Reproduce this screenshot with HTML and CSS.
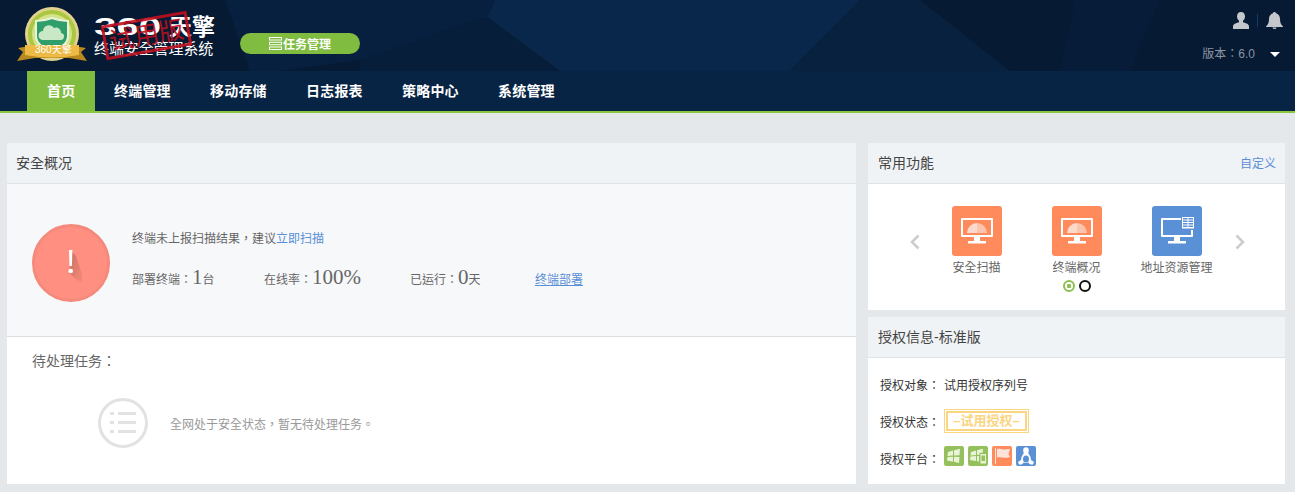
FILE: index.html
```html
<!DOCTYPE html>
<html>
<head>
  <meta charset="UTF-8">
  <meta name="viewport" content="width=device-width, initial-scale=1.0">
  <title>360天擎 终端安全管理系统</title>
  <link rel="stylesheet" href="styles.css">
</head>
<body>
  <div class="header">
    <svg class="bg-shapes" width="1295" height="71" viewBox="0 0 1295 71">
      <polygon points="225,0 495,0 487,17 360,60 280,71 250,71" fill="#07203f"/>
      <polygon points="360,71 360,60 487,17 560,71" fill="#061e3a"/>
      <polygon points="495,0 860,0 790,71 560,71 487,17" fill="#09264b"/>
      <polygon points="860,0 920,0 1010,71 790,71" fill="#07213f"/>
      <polygon points="1060,71 1075,0 1160,0 1130,71" fill="#071c38"/>
    </svg>
    <div class="brand">
      <svg class="badge" width="72" height="58" viewBox="0 0 72 58">
        <circle cx="35" cy="27" r="27" fill="#e2d28f"/>
        <circle cx="35" cy="27" r="24" fill="#a9c73f"/>
        <circle cx="35" cy="27" r="20" fill="#d5e28c"/>
        <path d="M19 14c6 0 11-1 16-3 5 2 10 3 16 3v15c0 8-8 12-16 16-8-4-16-8-16-16z" fill="#2f9e6a" stroke="#e8f3d8" stroke-width="2"/>
        <path d="M26 33a4.500 4.500 0 0 1 0-9 6 6 0 0 1 11-3 5 5 0 0 1 7 5 3.500 3.500 0 0 1-1 7z" fill="#c9e8c6"/>
        <path d="M0 54l6-9-5-4 12-2h44l12 2-5 4 6 9-18-3H18z" fill="#b98a20"/>
        <path d="M8 38h54v10q-27 5-54 0z" fill="#edbb45"/>
      </svg>
      <span class="badge-text">360天擎</span>
      <div class="brand-name">
        <div class="brand-top"><span class="brand-num"><span>360</span></span>天擎</div>
        <div class="brand-sub">终端安全管理系统</div>
        <div class="stamp">试用版</div>
      </div>
    </div>
    <a class="task-btn">
      <svg width="13" height="13" viewBox="0 0 13 13"><path d="M0 0h13v3.500H0zM1 1v1.500h11V1zM0 4.700h13v3.500H0zM1 5.700v1.500h11V5.700zM0 9.500h13V13H0zM1 10.500V12h11v-1.500z" fill="#fff" fill-rule="evenodd"/></svg>
      任务管理
    </a>
    <div class="header-right">
      <div class="user-icons">
        <svg width="16" height="17" viewBox="0 0 16 17"><path d="M8 0c2.600 0 4 2 4 4.500 0 2-1 3.500-2 4.300v1.500c2 .7 6 1.500 6 4.200V17H0v-2.500c0-2.700 4-3.500 6-4.200V8.800C5 8 4 6.500 4 4.500 4 2 5.400 0 8 0z" fill="#c4c8cc"/></svg>
        <i class="sep"></i>
        <svg width="17" height="17" viewBox="0 0 17 17"><path d="M8.500 0c1 0 1.500.6 1.500 1.300C12.500 2 14 4.200 14 7c0 4 1 5.500 3 7.500V15H0v-.5C2 12.500 3 11 3 7c0-2.800 1.500-5 4-5.700C7 .6 7.500 0 8.500 0zM6.500 15.500h4a2 1.500 0 0 1-4 0z" fill="#c4c8cc"/></svg>
      </div>
      <div class="version">版本：6.0<span class="caret"></span></div>
    </div>
  </div>

  <div class="nav">
    <a class="nav-item active">首页</a>
    <a class="nav-item">终端管理</a>
    <a class="nav-item">移动存储</a>
    <a class="nav-item">日志报表</a>
    <a class="nav-item">策略中心</a>
    <a class="nav-item">系统管理</a>
  </div>

  <div class="main">
    <div class="panel left">
      <div class="panel-title">安全概况</div>
      <div class="overview">
        <div class="alert-circle">
          <svg width="24" height="38" viewBox="0 0 24 38">
            <defs>
              <linearGradient id="excl" x1="0" y1="0" x2="1" y2="1">
                <stop offset="0" stop-color="#c9705f"/>
                <stop offset="1" stop-color="#f58a7c"/>
              </linearGradient>
            </defs>
            <polygon points="10,8 14,12 20,30 20,38 15,36 7,29" fill="url(#excl)"/>
            <path d="M7 6h3.400l-.5 16H7.500z" fill="#fff"/>
            <circle cx="8.700" cy="27" r="2.300" fill="#fff"/>
          </svg>
        </div>
        <div class="overview-info">
          <div class="notice">终端未上报扫描结果，建议<a class="link">立即扫描</a></div>
          <div class="stats">
            <div class="stat s1">部署终端：<b>1</b>台</div>
            <div class="stat s2">在线率：<b>100%</b></div>
            <div class="stat s3">已运行：<b>0</b>天</div>
            <a class="link under">终端部署</a>
          </div>
        </div>
      </div>
      <div class="tasks">
        <div class="tasks-title">待处理任务：</div>
        <div class="tasks-empty">
          <svg width="50" height="50" viewBox="0 0 50 50">
            <circle cx="25" cy="25" r="23.500" fill="none" stroke="#e2e2e2" stroke-width="3"/>
            <path d="M12 14h4v3h-4zM20 14h18v3H20zM12 23h4v3h-4zM20 23h18v3H20zM12 32h4v3h-4zM20 32h18v3H20z" fill="#e2e2e2"/>
          </svg>
          <span>全网处于安全状态，暂无待处理任务。</span>
        </div>
      </div>
    </div>

    <div class="side">
      <div class="panel quick">
        <div class="panel-title">常用功能<a class="link custom">自定义</a></div>
        <div class="carousel">
          <svg class="arrow" width="10" height="16" viewBox="0 0 10 16"><path d="M8.500 1.500L2 8l6.500 6.500" fill="none" stroke="#ccc" stroke-width="2.500"/></svg>
          <div class="apps">
            <div class="app">
              <div class="app-icon orange">
                <svg width="34" height="28" viewBox="0 0 34 28">
                  <path d="M2 1h30a1 1 0 0 1 1 1v17a1 1 0 0 1-1 1H2a1 1 0 0 1-1-1V2a1 1 0 0 1 1-1zM3 3v15h28V3zM14 20h6v4h-6zM8 24h18v2.500H8z" fill="#fff" fill-rule="evenodd"/>
                  <path d="M7 16a10 10 0 0 1 10-10v10z" fill="#fbd9cb"/>
                  <path d="M17 6a10 10 0 0 1 10 10H17z" fill="#fbc4ad"/>
                </svg>
              </div>
              <div class="app-name">安全扫描</div>
            </div>
            <div class="app">
              <div class="app-icon orange">
                <svg width="34" height="28" viewBox="0 0 34 28">
                  <path d="M2 1h30a1 1 0 0 1 1 1v17a1 1 0 0 1-1 1H2a1 1 0 0 1-1-1V2a1 1 0 0 1 1-1zM3 3v15h28V3zM14 20h6v4h-6zM8 24h18v2.500H8z" fill="#fff" fill-rule="evenodd"/>
                  <path d="M7 16a10 10 0 0 1 10-10v10z" fill="#fbd9cb"/>
                  <path d="M17 6a10 10 0 0 1 10 10H17z" fill="#fbc4ad"/>
                </svg>
              </div>
              <div class="app-name">终端概况</div>
            </div>
            <div class="app">
              <div class="app-icon blue">
                <svg width="34" height="28" viewBox="0 0 34 28">
                  <path d="M2 1h19v2H3v15h28v-5h2v6a1 1 0 0 1-1 1H2a1 1 0 0 1-1-1V2a1 1 0 0 1 1-1zM14 20h6v4h-6zM8 24h18v2.500H8z" fill="#fff"/>
                  <path d="M22 0h12v11.500H22zM23 1v1.500h4.500V1zM28.500 1v1.500H33V1zM23 3.500V5h4.500V3.500zM28.500 3.500V5H33V3.500zM23 6v1.500h4.500V6zM28.500 6v1.500H33V6zM23 8.500V10h4.500V8.500zM28.500 8.500V10H33V8.500z" fill="#fff" fill-rule="evenodd"/>
                </svg>
              </div>
              <div class="app-name">地址资源管理</div>
            </div>
          </div>
          <svg class="arrow" width="10" height="16" viewBox="0 0 10 16"><path d="M1.500 1.500L8 8l-6.500 6.500" fill="none" stroke="#ccc" stroke-width="2.500"/></svg>
          <div class="dots"><i class="dot on"></i><i class="dot"></i></div>
        </div>
      </div>

      <div class="panel license">
        <div class="panel-title">授权信息-标准版</div>
        <div class="license-body">
          <div class="row r1"><span class="label">授权对象：</span>试用授权序列号</div>
          <div class="row r2"><span class="label">授权状态：</span><span class="trial">–试用授权–</span></div>
          <div class="row r3"><span class="label">授权平台：</span>
            <span class="plat green">
              <svg width="16" height="16" viewBox="0 0 16 16"><path d="M2 4l5-1.500v5L1.500 8zM8 2.300l6-1.500-.5 6.500L8 7.500zM1.500 9L7 8.700v5L1 12.500zM8 8.700l5.500.2-.5 6L8 13.800z" fill="#e9f3da"/></svg>
            </span>
            <span class="plat green">
              <svg width="16" height="16" viewBox="0 0 16 16"><path d="M1 4l5-1.500v4.500L.5 7.500zM7 2.300l6-1.500-.3 4H9.500v2H7zM.5 8.500L6 8v5L0 12zM7 8h2v5.500l-2-.3z" fill="#e9f3da"/><path d="M10.500 6H16v9.500h-5.500zM11.500 7.500v5.500H15V7.500z" fill="#e9f3da" fill-rule="evenodd"/></svg>
            </span>
            <span class="plat orange">
              <svg width="16" height="16" viewBox="0 0 16 16"><path d="M1 0h1v16H1z" fill="#fde4d8"/><path d="M3 1c3-1 5 1.500 11 0l2 0-1.500 5L16 9c-6 2-9-.5-13 .5z" fill="#fde4d8"/></svg>
            </span>
            <span class="plat blue">
              <svg width="16" height="18" viewBox="0 0 16 18">
                <ellipse cx="8" cy="3.500" rx="2.800" ry="3.300" fill="#fff"/>
                <path d="M8 4C5 6 3 10 3 13c0 2 2 3 5 3s5-1 5-3c0-3-2-7-5-9z" fill="#fff"/>
                <ellipse cx="8" cy="12" rx="3" ry="3.500" fill="#5a90d6"/>
                <path d="M0 15l3-2 2.500 3-2 1.500H1zM16 15l-3-2-2.500 3 2 1.500H15z" fill="#fff"/>
              </svg>
            </span>
          </div>
        </div>
      </div>
    </div>
  </div>
</body>
</html>
```

FILE: styles.css
```css
html, body {
  margin: 0;
  padding: 0;
}
body {
  font-family: "Liberation Sans", "Noto Sans CJK TC", sans-serif;
  font-size: 12px;
  color: #666;
  background: #e5e8eb;
  height: 492px;
  overflow: hidden;
}
a {
  cursor: pointer;
}
.header {
  position: relative;
  height: 71px;
  background: #061a33;
  display: flex;
  overflow: hidden;
}
.bg-shapes {
  position: absolute;
  left: 0;
  top: 0;
}
.brand {
  position: relative;
  width: 240px;
  height: 71px;
}
.badge {
  position: absolute;
  left: 17px;
  top: 7px;
}
.badge-text {
  position: absolute;
  left: 35px;
  top: 43px;
  font-size: 10px;
  line-height: 14px;
  color: #fff;
  white-space: nowrap;
}
.brand-name {
  position: absolute;
  left: 94px;
  top: 14px;
  color: #fff;
}
.brand-top {
  font-size: 23px;
  line-height: 26px;
  font-weight: bold;
  white-space: nowrap;
  display: flex;
}
.brand-num {
  width: 75px;
}
.brand-num span {
  display: inline-block;
  transform: scaleX(1.75);
  transform-origin: left center;
}
.brand-sub {
  font-size: 15px;
  line-height: 16px;
  margin-top: 1px;
  white-space: nowrap;
  width: 122px;
  letter-spacing: -.1px;
}
.stamp {
  position: absolute;
  left: 9px;
  top: 4px;
  border: 3px solid #c0101e;
  color: #c0101e;
  font-size: 25px;
  font-weight: normal;
  line-height: 29px;
  padding: 0 3px;
  white-space: nowrap;
  opacity: .9;
  transform: rotate(-10deg);
}
.task-btn {
  position: relative;
  align-self: flex-start;
  margin-top: 33px;
  width: 120px;
  height: 21px;
  border-radius: 11px;
  background: #80bc3f;
  color: #fff;
  font-size: 12px;
  font-weight: bold;
  display: flex;
  align-items: center;
  justify-content: center;
  gap: 1px;
}
.header-right {
  position: absolute;
  right: 12px;
  top: 12px;
  display: flex;
  flex-direction: column;
  align-items: flex-end;
}
.user-icons {
  display: flex;
  align-items: center;
  gap: 13px;
}
.sep {
  width: 1px;
  height: 13px;
  background: #173a63;
  margin: 0 -5px;
}
.version {
  margin-top: 17px;
  margin-right: 3px;
  color: #8b95a1;
  line-height: 16px;
  display: flex;
  align-items: center;
}
.caret {
  margin-left: 15px;
  border-left: 5px solid transparent;
  border-right: 5px solid transparent;
  border-top: 5px solid #fff;
}
.nav {
  height: 40px;
  background: #082444;
  border-bottom: 2px solid #8cc63f;
  padding-left: 27px;
  display: flex;
}
.nav-item {
  width: 56px;
  padding: 0 20px 0 0;
  line-height: 40px;
  color: #fff;
  font-size: 14px;
  font-weight: bold;
  letter-spacing: .2px;
  white-space: nowrap;
  margin-left: -1px;
  margin-right: 1px;
  padding-left: 20px;
}
.nav-item.active {
  width: 28px;
  margin: 0;
  background: #80bc3f;
}
.main {
  margin-top: 30px;
  padding: 0 10px 0 7px;
  display: flex;
  gap: 12px;
  align-items: flex-start;
}
.panel {
  background: #fff;
}
.left {
  width: 849px;
  height: 341px;
}
.side {
  width: 417px;
  display: flex;
  flex-direction: column;
  gap: 7px;
}
.panel-title {
  height: 40px;
  line-height: 40px;
  padding: 0 10px;
  background: #f0f3f6;
  border-bottom: 1px solid #dfe3e6;
  font-size: 14px;
  color: #444;
  display: flex;
  justify-content: space-between;
}
.left .panel-title {
  padding-left: 9px;
}
.link {
  color: #5a8fd6;
}
.under {
  text-decoration: underline;
}
.custom {
  font-size: 12px;
  color: #5a8fd6;
  margin-right: -1px;
  padding-top: 1px;
}
.overview {
  height: 152px;
  background: #f7f8fa;
  border-bottom: 1px solid #dedede;
  display: flex;
  align-items: center;
  padding-left: 25px;
}
.alert-circle {
  box-sizing: border-box;
  width: 78px;
  height: 78px;
  margin-top: 6px;
  padding-left: 6px;
  border-radius: 50%;
  background: #ff8f81;
  border: 3px solid #f58a7c;
  display: flex;
  align-items: center;
  justify-content: center;
  flex: none;
}
.overview-info {
  margin-left: 22px;
}
.notice {
  line-height: 16px;
}
.stats {
  display: flex;
  align-items: baseline;
  margin-top: 18px;
}
.stat b {
  font-family: "Liberation Serif", serif;
  font-weight: normal;
  font-size: 21px;
}
.s1 { width: 132px; }
.s2 { width: 146px; }
.s3 { width: 125px; }
.tasks {
  padding: 14px 25px;
}
.tasks-title {
  font-size: 14px;
  line-height: 20px;
}
.tasks-empty {
  display: flex;
  align-items: center;
  margin-top: 27px;
  margin-left: 66px;
  color: #999;
}
.tasks-empty span {
  margin-left: 22px;
}
.quick {
  height: 167px;
}
.carousel {
  position: relative;
  height: 126px;
  display: flex;
  align-items: center;
  padding: 0 40px 0 42px;
  justify-content: space-between;
}
.arrow {
  margin-top: -11px;
}
.apps {
  display: flex;
  margin-top: -1px;
  margin-bottom: 11px;
  margin-left: -2px;
}
.app {
  width: 100px;
  display: flex;
  flex-direction: column;
  align-items: center;
}
.app-icon {
  width: 50px;
  height: 50px;
  border-radius: 3px;
  display: flex;
  align-items: center;
  justify-content: center;
}
.orange { background: #ff8a5c; }
.blue { background: #5a90d6; }
.green { background: #94c15b; }
.app-name {
  margin-top: 4px;
  line-height: 16px;
  white-space: nowrap;
}
.dots {
  position: absolute;
  left: 195px;
  top: 96px;
  display: flex;
  gap: 4px;
}
.dot {
  width: 8px;
  height: 8px;
  border: 2px solid #111;
  border-radius: 50%;
}
.dot.on {
  border-color: #8cc152;
  background: radial-gradient(circle, #8cc152 0, #8cc152 2px, #fff 2.500px);
}
.license {
  height: 167px;
}
.license-body {
  padding: 0 12px;
  color: #333;
}
.row {
  display: flex;
  align-items: center;
}
.r1 { margin-top: 17px; height: 18px; }
.r2 { margin-top: 16px; height: 24px; }
.r3 { margin-top: 13px; height: 20px; }
.r3 .label { margin-top: 4px; }
.label {
  width: 64px;
  flex: none;
}
.trial {
  box-sizing: border-box;
  width: 85px;
  height: 24px;
  border: 1px solid #fbd57f;
  box-shadow: inset 0 0 0 1px #fff, inset 0 0 0 3px #fbd57f, inset 0 0 0 4px #fff;
  color: #fbd57f;
  font-weight: bold;
  font-size: 13px;
  line-height: 22px;
  text-align: center;
}
.plat {
  width: 20px;
  height: 20px;
  border-radius: 2px;
  margin-right: 4px;
  display: flex;
  align-items: center;
  justify-content: center;
}
```
